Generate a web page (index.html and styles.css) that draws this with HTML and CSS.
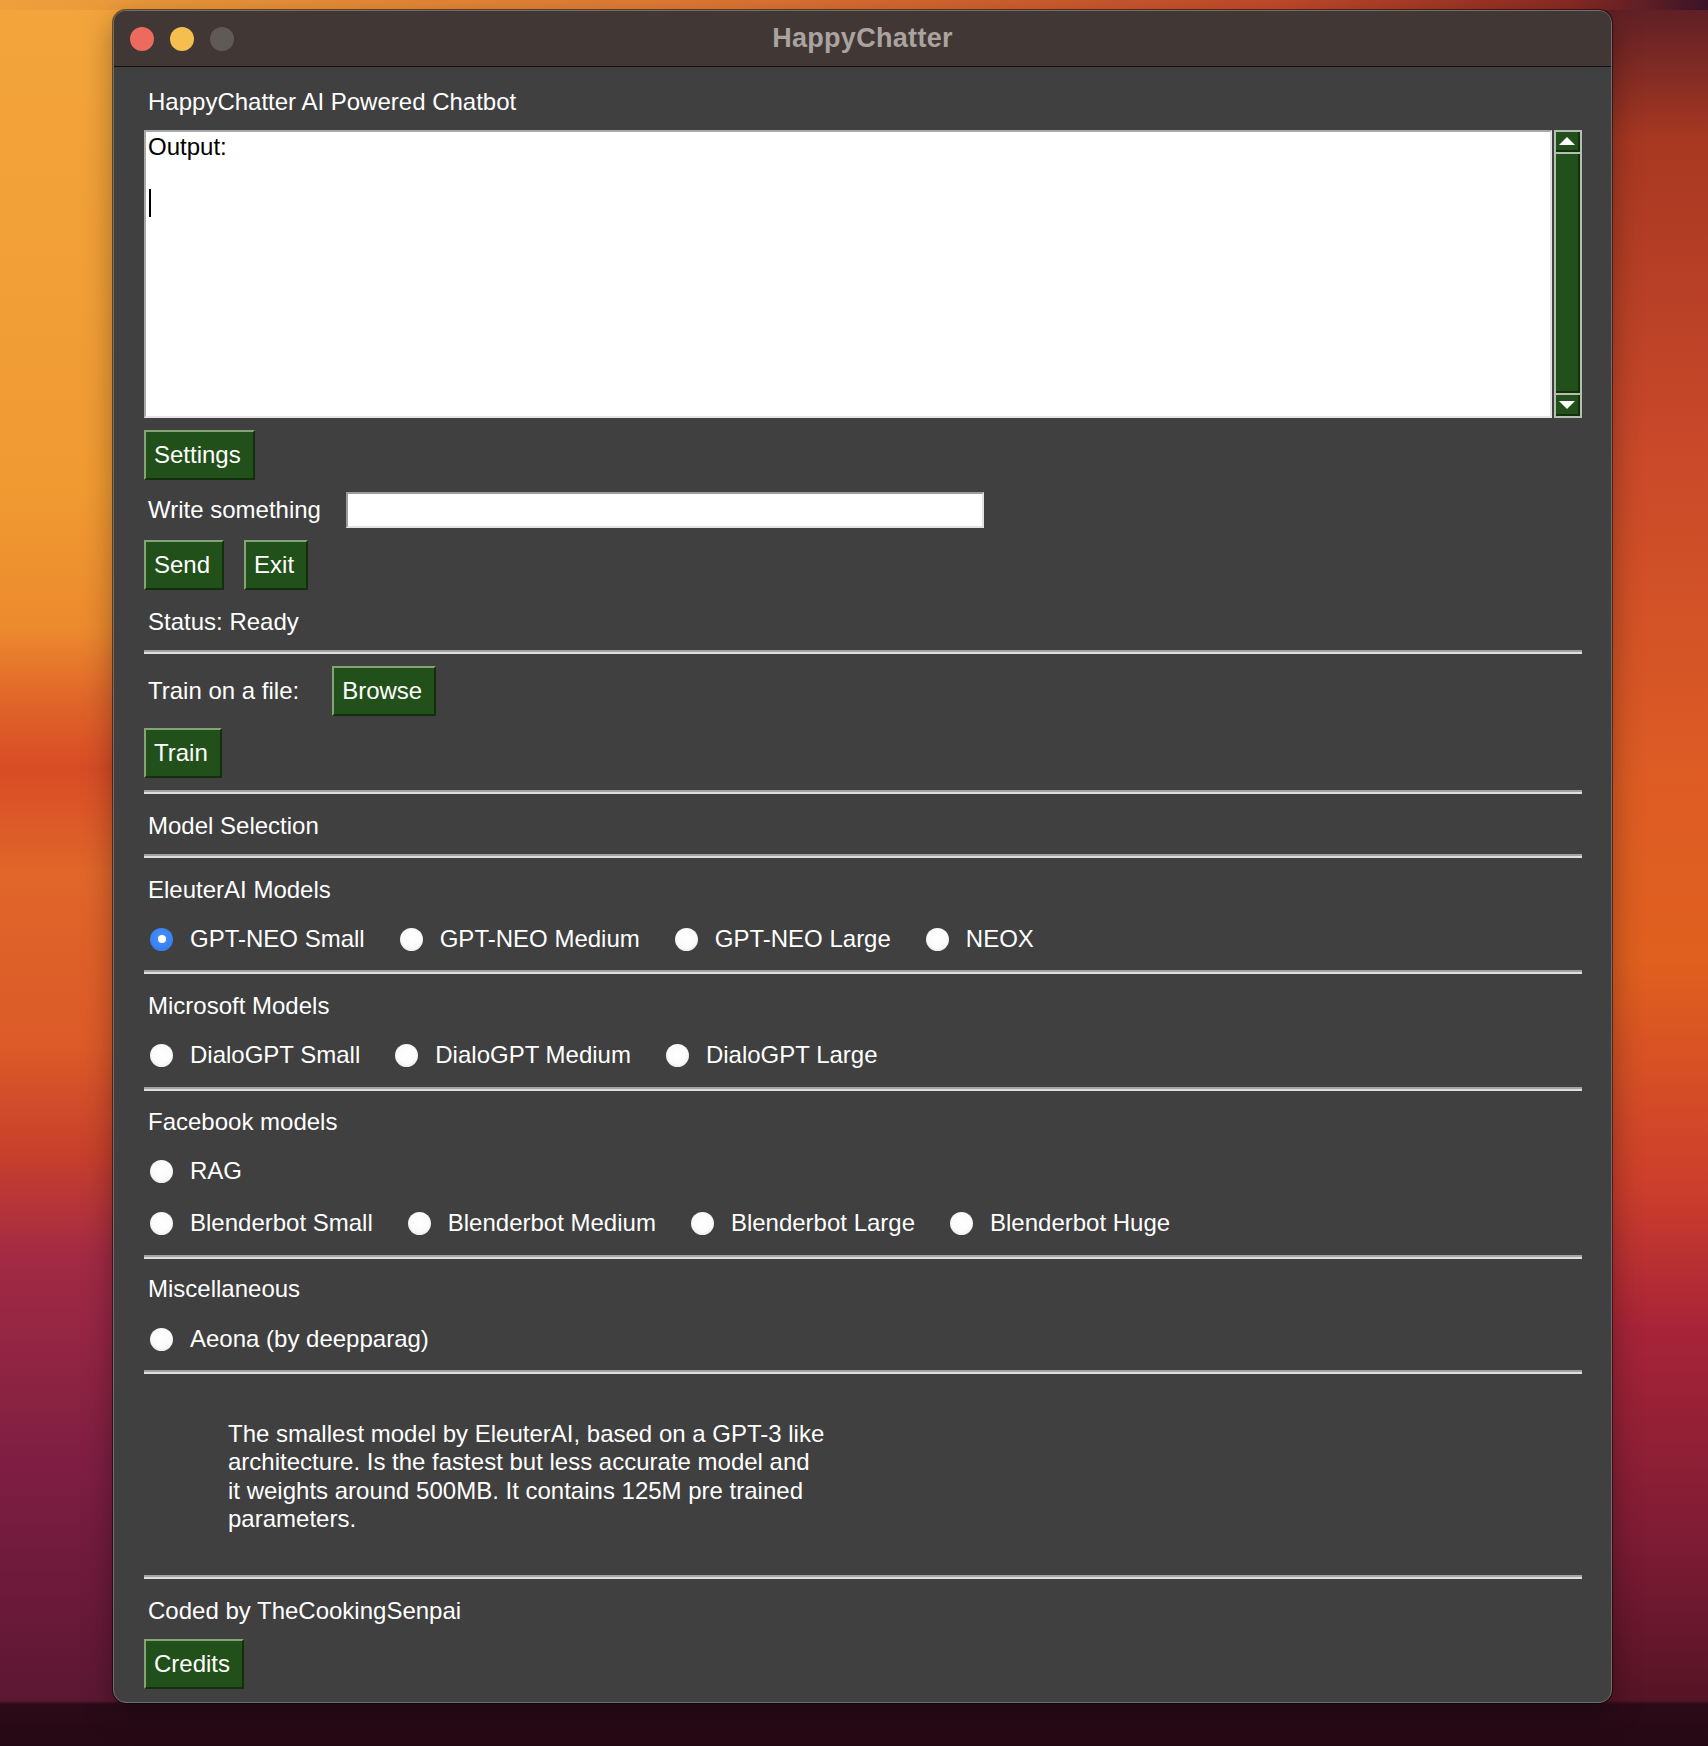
FILE: index.html
```html
<!DOCTYPE html>
<html>
<head>
<meta charset="utf-8">
<title>HappyChatter</title>
<link rel="stylesheet" href="styles.css">
</head>
<body>
<div class="window">
  <div class="titlebar">
    <div class="lights">
      <span class="light red"></span>
      <span class="light yellow"></span>
      <span class="light gray"></span>
    </div>
    <div class="title">HappyChatter</div>
    <div class="spacer"></div>
  </div>
  <div class="content">
    <div class="label header">HappyChatter AI Powered Chatbot</div>

    <div class="output-row">
      <div class="output">
        <div class="out-line">Output:</div>
        <div class="out-line"></div>
        <div class="out-line"><span class="caret"></span></div>
      </div>
      <div class="scrollbar">
        <div class="sb-part sb-up"><span class="arrow-up"></span></div>
        <div class="sb-part sb-thumb"></div>
        <div class="sb-part sb-down"><span class="arrow-down"></span></div>
      </div>
    </div>

    <div class="row m12"><span class="btn">Settings</span></div>

    <div class="row write-row m12">
      <span class="label">Write something</span>
      <span class="entry"></span>
    </div>

    <div class="row btn-row m12">
      <span class="btn">Send</span>
      <span class="btn">Exit</span>
    </div>

    <div class="label status">Status: Ready</div>

    <div class="sep m14"></div>

    <div class="row train-row m12">
      <span class="label">Train on a file:</span>
      <span class="btn">Browse</span>
    </div>
    <div class="row m12"><span class="btn">Train</span></div>

    <div class="sep m12"></div>
    <div class="label sec">Model Selection</div>
    <div class="sep m14"></div>

    <div class="label sec">EleuterAI Models</div>
    <div class="radio-row m21">
      <span class="radio"><span class="dot checked"></span><span class="rlabel">GPT-NEO Small</span></span>
      <span class="radio"><span class="dot"></span><span class="rlabel">GPT-NEO Medium</span></span>
      <span class="radio"><span class="dot"></span><span class="rlabel">GPT-NEO Large</span></span>
      <span class="radio"><span class="dot"></span><span class="rlabel">NEOX</span></span>
    </div>
    <div class="sep m17"></div>

    <div class="label sec">Microsoft Models</div>
    <div class="radio-row m21">
      <span class="radio"><span class="dot"></span><span class="rlabel">DialoGPT Small</span></span>
      <span class="radio"><span class="dot"></span><span class="rlabel">DialoGPT Medium</span></span>
      <span class="radio"><span class="dot"></span><span class="rlabel">DialoGPT Large</span></span>
    </div>
    <div class="sep m18"></div>

    <div class="label sec m17">Facebook models</div>
    <div class="radio-row m21">
      <span class="radio"><span class="dot"></span><span class="rlabel">RAG</span></span>
    </div>
    <div class="radio-row m24">
      <span class="radio"><span class="dot"></span><span class="rlabel">Blenderbot Small</span></span>
      <span class="radio"><span class="dot"></span><span class="rlabel">Blenderbot Medium</span></span>
      <span class="radio"><span class="dot"></span><span class="rlabel">Blenderbot Large</span></span>
      <span class="radio"><span class="dot"></span><span class="rlabel">Blenderbot Huge</span></span>
    </div>
    <div class="sep m18"></div>

    <div class="label sec m16">Miscellaneous</div>
    <div class="radio-row m22">
      <span class="radio"><span class="dot"></span><span class="rlabel">Aeona (by deepparag)</span></span>
    </div>
    <div class="sep m17"></div>

    <div class="desc">The smallest model by EleuterAI, based on a GPT-3 like<br>architecture. Is the fastest but less accurate model and<br>it weights around 500MB. It contains 125M pre trained<br>parameters.</div>

    <div class="sep m41"></div>
    <div class="label sec">Coded by TheCookingSenpai</div>
    <div class="row m14"><span class="btn">Credits</span></div>
  </div>
</div>
</body>
</html>
```

FILE: styles.css
```css
html, body {
  margin: 0;
  padding: 0;
}

body {
  width: 1708px;
  height: 1746px;
  overflow: hidden;
  box-sizing: border-box;
  padding: 10px 0 0 113px;
  font-family: "Liberation Sans", Arial, sans-serif;
  background:
    linear-gradient(to right, #eea03c 0%, #e07a34 40%, #c24a2a 75%, #8a2a24 92%, #3a1428 100%) top left / 100% 10px no-repeat,
    linear-gradient(to bottom, rgba(0,0,0,0) 97.4%, #2c0b18 97.6%, #240814 100%),
    linear-gradient(to bottom, #f3a53c 0%, #f09a32 28%, #ec8a2e 36%, #e0662a 40%, #d84c26 44%, #e0662a 50%, #dc5a28 60%, #c8402c 66%, #a22a44 72%, #7e1e42 84%, #55162e 100%) left top / 50% 100% no-repeat,
    linear-gradient(to bottom, #5a1e26 0%, #a83822 8%, #c8482a 25%, #de5c24 45%, #e0601f 55%, #cc3e2c 68%, #a82438 76%, #7e1c34 88%, #4a1222 100%) right top / 50% 100% no-repeat;
}

.window {
  width: 1499px;
  height: 1693px;
  box-sizing: border-box;
  border: 1px solid #6f6f6f;
  border-radius: 13px;
  background: #404040;
  overflow: hidden;
  box-shadow: 0 0 0 1px rgba(0,0,0,0.5), 0 10px 30px rgba(0,0,0,0.35);
  display: flex;
  flex-direction: column;
}

.titlebar {
  height: 56px;
  box-sizing: border-box;
  background: #413735;
  border-bottom: 1px solid #111;
  display: grid;
  grid-template-columns: 1fr auto 1fr;
  align-items: center;
  padding: 0 16px;
}

.lights {
  display: flex;
  gap: 16px;
}

.light {
  width: 24px;
  height: 24px;
  border-radius: 50%;
  display: block;
}
.light.red { background: #ed6a5e; }
.light.yellow { background: #f5bf4f; }
.light.gray { background: #5f5a58; }

.title {
  font-weight: bold;
  font-size: 27px;
  color: #aaa3a0;
  letter-spacing: 0.3px;
}

.content {
  padding: 21px 29px 0 30px;
  display: flex;
  flex-direction: column;
  color: #ffffff;
  font-size: 24px;
  line-height: 28px;
}

.label {
  padding: 0 4px;
  line-height: 28px;
  white-space: nowrap;
}

.output-row {
  margin-top: 14px;
  height: 288px;
  display: flex;
  gap: 2px;
}

.output {
  flex: 1;
  background: #fff;
  color: #000;
  box-sizing: border-box;
  border-top: 2px solid #a9a9a9;
  border-left: 2px solid #a9a9a9;
  border-bottom: 2px solid #e4e4e4;
  border-right: 2px solid #e4e4e4;
  padding: 1px 2px;
}

.out-line {
  height: 28px;
  line-height: 28px;
}

.caret {
  display: inline-block;
  width: 2px;
  height: 28px;
  background: #000;
  vertical-align: top;
  margin-left: 1px;
}

.scrollbar {
  width: 28px;
  box-sizing: border-box;
  border: 2px solid #b4bfb1;
  background: #b4bfb1;
  display: flex;
  flex-direction: column;
  gap: 2px;
}

.sb-part {
  background: #22501a;
  border-right: 2px solid #123009;
  border-bottom: 2px solid #123009;
  box-sizing: border-box;
  display: flex;
  align-items: center;
  justify-content: center;
}

.sb-up { height: 20px; }
.sb-down { height: 21px; }
.sb-thumb { flex: 1; }

.arrow-up {
  width: 0;
  height: 0;
  border-left: 8px solid transparent;
  border-right: 8px solid transparent;
  border-bottom: 8px solid #ffffff;
}

.arrow-down {
  width: 0;
  height: 0;
  border-left: 8px solid transparent;
  border-right: 8px solid transparent;
  border-top: 8px solid #ffffff;
}

.row {
  display: flex;
  align-items: center;
}

.btn {
  display: inline-block;
  height: 50px;
  box-sizing: border-box;
  padding: 0 12px 0 8px;
  line-height: 46px;
  background: #22501a;
  color: #ffffff;
  border-top: 2px solid #84a477;
  border-left: 2px solid #84a477;
  border-bottom: 2px solid #12300c;
  border-right: 2px solid #12300c;
  white-space: nowrap;
}

.write-row { gap: 21px; height: 36px; }

.entry {
  width: 638px;
  height: 36px;
  box-sizing: border-box;
  background: #fff;
  border-top: 2px solid #9c9c9c;
  border-left: 2px solid #9c9c9c;
  border-bottom: 2px solid #e2e2e2;
  border-right: 2px solid #e2e2e2;
}

.btn-row { gap: 20px; }

.status { margin-top: 18px; }

.train-row { gap: 29px; }

.sep {
  height: 4px;
  box-sizing: border-box;
  border-top: 2px solid #a2a2a2;
  border-bottom: 2px solid #dedede;
}

.sec { margin-top: 18px; }

.radio-row {
  display: flex;
  align-items: center;
  gap: 29px;
  height: 28px;
}

.radio {
  display: flex;
  align-items: center;
  padding-left: 6px;
  gap: 17px;
  white-space: nowrap;
}

.dot {
  width: 23px;
  height: 23px;
  border-radius: 50%;
  box-sizing: border-box;
  background: radial-gradient(circle at 50% 45%, #ffffff 0%, #fbfbfb 55%, #d4d4d4 100%);
  display: flex;
  align-items: center;
  justify-content: center;
}

.dot.checked {
  background: radial-gradient(circle at 50% 40%, #4a90fa 0%, #2f77f0 100%);
}

.dot.checked::after {
  content: "";
  width: 8px;
  height: 8px;
  border-radius: 50%;
  background: #ffffff;
}

.desc {
  margin-top: 46px;
  padding-left: 84px;
  line-height: 28.4px;
  white-space: nowrap;
}

.m12 { margin-top: 12px; }
.m14 { margin-top: 14px; }
.m16 { margin-top: 16px; }
.m17 { margin-top: 17px; }
.m18 { margin-top: 18px; }
.m21 { margin-top: 21px; }
.m22 { margin-top: 22px; }
.m24 { margin-top: 24px; }
.m41 { margin-top: 41px; }
```
